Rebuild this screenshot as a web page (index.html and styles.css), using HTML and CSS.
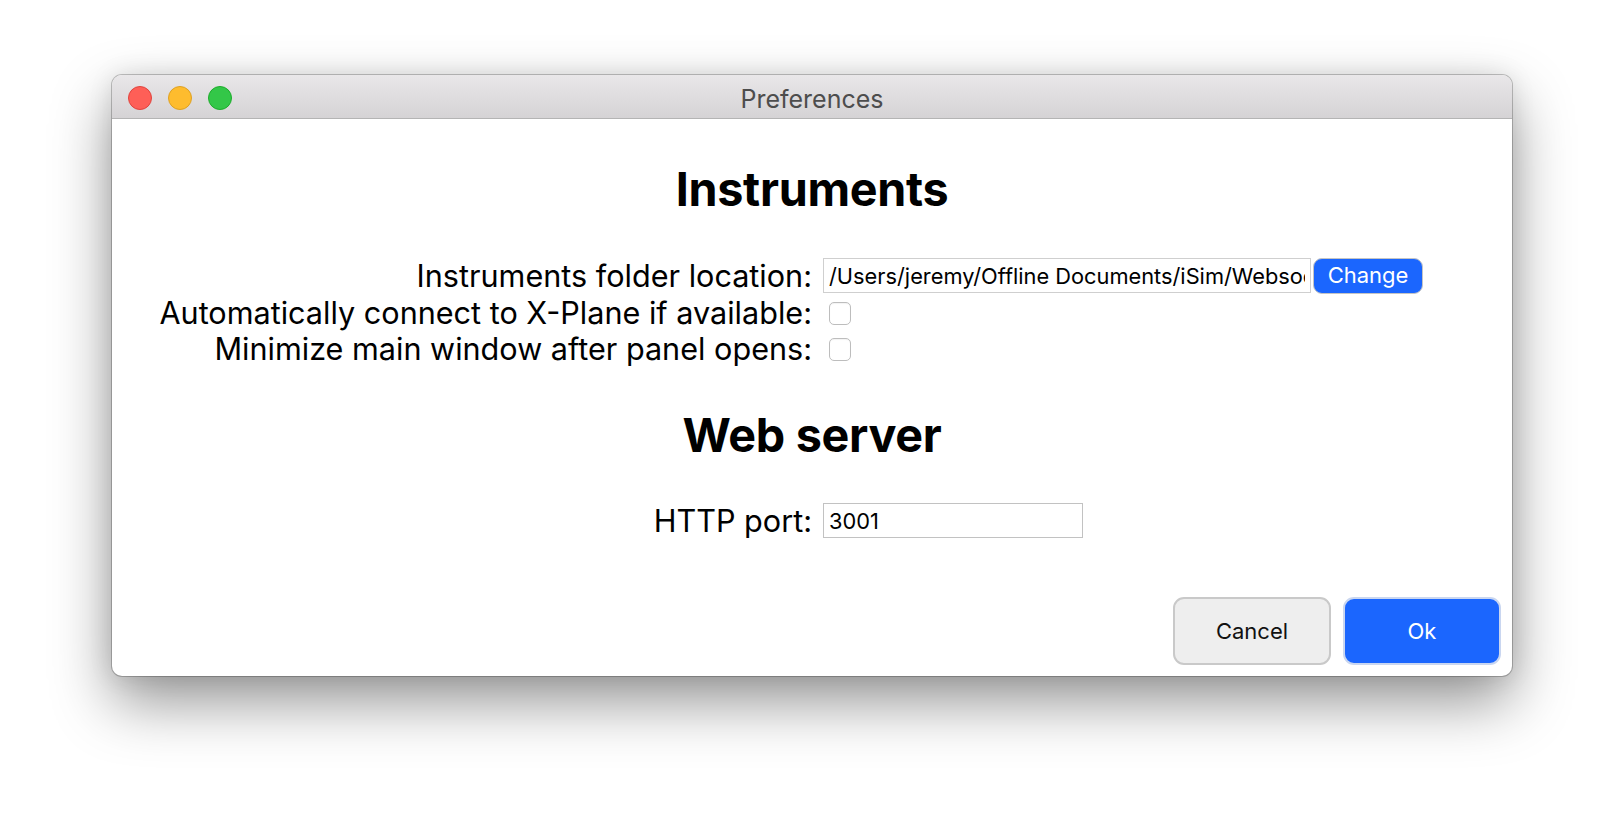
FILE: index.html
```html
<!DOCTYPE html>
<html>
<head>
<meta charset="utf-8">
<title>Preferences</title>
<link rel="stylesheet" href="styles.css">
</head>
<body>
<div class="window">
  <div class="titlebar">
    <div class="lights">
      <span class="light red"></span>
      <span class="light yellow"></span>
      <span class="light green"></span>
    </div>
    <div class="title">Preferences</div>
  </div>
  <div class="content">
    <h1 class="heading first">Instruments</h1>
    <div class="form">
      <div class="label row-tall">Instruments folder location:</div>
      <div class="control row-tall">
        <input class="text path" type="text" value="/Users/jeremy/Offline Documents/iSim/Websocket Panels">
        <button class="change">Change</button>
      </div>
      <div class="label row">Automatically connect to X-Plane if available:</div>
      <div class="control row"><input class="check" type="checkbox"></div>
      <div class="label row">Minimize main window after panel opens:</div>
      <div class="control row"><input class="check" type="checkbox"></div>
    </div>
    <h1 class="heading second">Web server</h1>
    <div class="form">
      <div class="label row-tall">HTTP port:</div>
      <div class="control row-tall"><input class="text port" type="text" value="3001"></div>
    </div>
    <div class="footer">
      <button class="btn cancel">Cancel</button>
      <button class="btn ok">Ok</button>
    </div>
  </div>
</div>
</body>
</html>
```

FILE: styles.css
```css
* { box-sizing: border-box; }
html, body { margin: 0; padding: 0; }
body {
  width: 1624px;
  height: 824px;
  background: #ffffff;
  padding: 75px 0 0 112px;
  font-family: "Inter", "Liberation Sans", sans-serif;
  overflow: hidden;
}
.window {
  width: 1400px;
  height: 601px;
  border-radius: 10px;
  background: #ffffff;
  display: flex;
  flex-direction: column;
  box-shadow: 0 0 0 1px rgba(0,0,0,0.22), 0 26px 60px rgba(0,0,0,0.42), 0 0 24px rgba(0,0,0,0.10);
  overflow: hidden;
}
.titlebar {
  height: 44px;
  flex: none;
  display: flex;
  align-items: center;
  position: relative;
  background: linear-gradient(#e9e7e9, #d5d3d5);
  border-bottom: 1px solid #b4b4b4;
}
.lights {
  position: absolute;
  left: 16px;
  top: 11px;
  display: flex;
  gap: 16px;
}
.light {
  width: 24px;
  height: 24px;
  border-radius: 50%;
  display: block;
}
.red { background: #fe5f57; border: 1px solid #e0443e; }
.yellow { background: #febc2e; border: 1px solid #dea123; }
.green { background: #33c748; border: 1px solid #1dad2b; }
.title {
  flex: 1;
  text-align: center;
  font-size: 25px;
  color: #4d4d4d;
  padding-top: 5px;
}
.content {
  flex: 1;
  display: flex;
  flex-direction: column;
}
.heading {
  margin: 0;
  text-align: center;
  font-size: 46.7px;
  font-weight: 700;
  line-height: 56px;
  color: #000;
  letter-spacing: -0.3px;
}
.heading.first { margin-top: 42px; margin-bottom: 39px; }
.heading.second { margin-top: 40px; margin-bottom: 38px; }
.form {
  display: grid;
  grid-template-columns: 1fr 1fr;
}
.label {
  text-align: right;
  font-size: 30.6px;
  line-height: 36px;
  color: #000;
  display: flex;
  align-items: center;
  justify-content: flex-end;
}
.control {
  display: flex;
  align-items: center;
  padding-left: 11px;
}
.row-tall { height: 39px; }
.row { height: 36px; }
.text {
  height: 35px;
  border: 1px solid #cfcfcf;
  border-radius: 0;
  padding: 0 5px;
  font-family: "Inter", "Liberation Sans", sans-serif;
  font-size: 21.8px;
  color: #000;
  outline: none;
  background: #fff;
}
.path { width: 488px; }
.port { width: 260px; border-color: #c2c2c2; }
.change {
  margin-left: 2px;
  width: 110px;
  height: 36px;
  background: #1b66fe;
  color: #fff;
  border: 1px solid #c4c4c4;
  border-radius: 9px;
  font-family: "Inter", "Liberation Sans", sans-serif;
  font-size: 22px;
  padding: 0 0 2px;
}
.check {
  appearance: none;
  -webkit-appearance: none;
  margin: 0 0 0 6px;
  width: 22px;
  height: 23px;
  border: 1px solid #bdbdbd;
  border-radius: 5px;
  background: #fff;
  box-shadow: inset 0 1px 1px rgba(0,0,0,0.05);
}
.footer {
  margin-top: auto;
  display: flex;
  justify-content: flex-end;
  gap: 12px;
  padding: 0 11px 11px 0;
}
.btn {
  width: 158px;
  height: 68px;
  border-radius: 11px;
  font-family: "Inter", "Liberation Sans", sans-serif;
  font-size: 22px;
  padding: 0;
}
.cancel {
  background: #eeeeee;
  border: 2px solid #c9c9c9;
  color: #111;
}
.ok {
  background: #1b66fe;
  border: 2px solid #c9d6f0;
  color: #fff;
}
```
